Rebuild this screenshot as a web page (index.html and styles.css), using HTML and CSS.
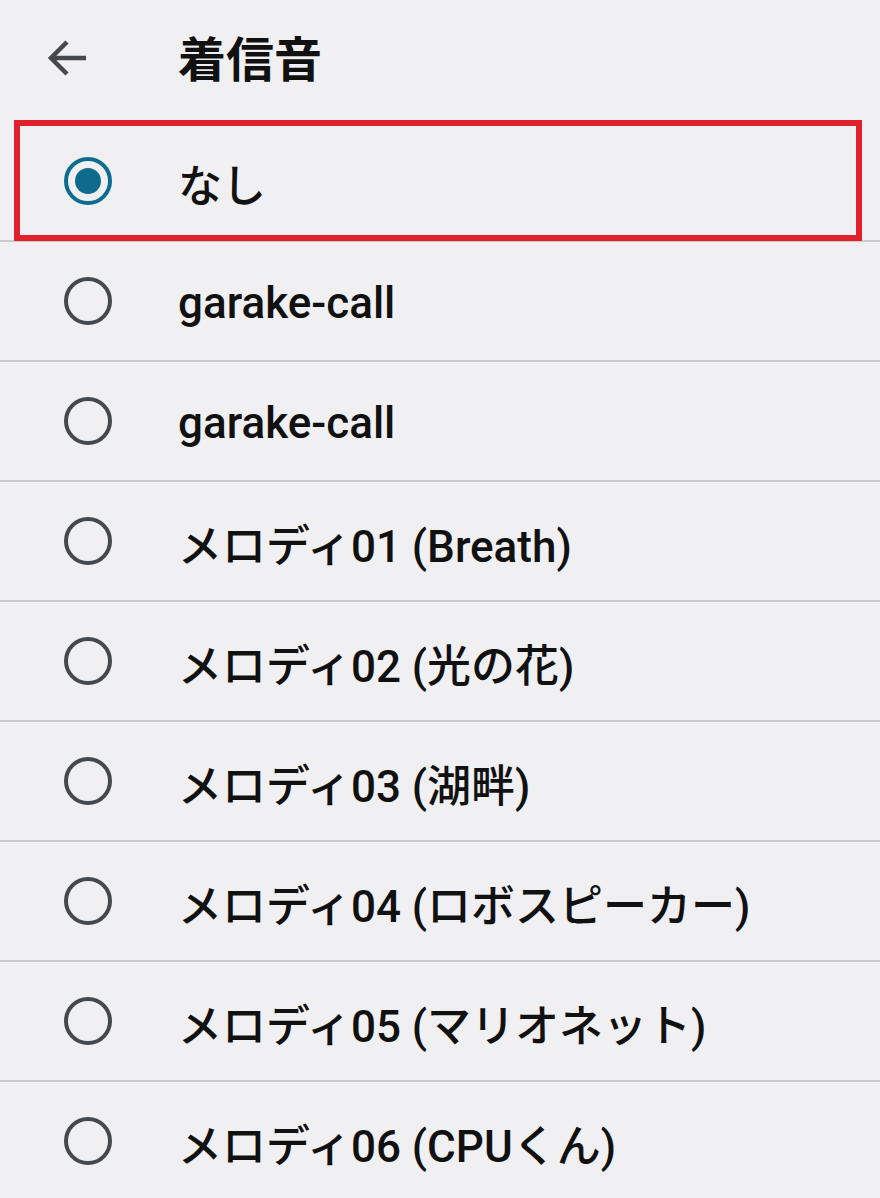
FILE: index.html
```html
<!DOCTYPE html>
<html lang="ja">
<head>
    <meta charset="UTF-8">
    <meta name="viewport" content="width=device-width, initial-scale=1.0">
    <title>着信音</title>
    <link rel="stylesheet" href="styles.css">
</head>
<body>

<div class="header">
    <svg class="back" width="44" height="40" viewBox="0 0 44 40">
        <path d="M40 20H6M21 4L5 20l16 16" fill="none" stroke="#45484c" stroke-width="4.5"/>
    </svg>
    <h1>着信音</h1>
</div>

<ul class="ringtones">
    <li class="row selected">
        <span class="radio on"></span>
        <span class="label">なし</span>
    </li>
    <li class="row"><span class="radio"></span><span class="label">garake-call</span></li>
    <li class="row"><span class="radio"></span><span class="label">garake-call</span></li>
    <li class="row"><span class="radio"></span><span class="label">メロディ01 (Breath)</span></li>
    <li class="row"><span class="radio"></span><span class="label">メロディ02 (光の花)</span></li>
    <li class="row"><span class="radio"></span><span class="label">メロディ03 (湖畔)</span></li>
    <li class="row"><span class="radio"></span><span class="label">メロディ04 (ロボスピーカー)</span></li>
    <li class="row"><span class="radio"></span><span class="label">メロディ05 (マリオネット)</span></li>
    <li class="row"><span class="radio"></span><span class="label">メロディ06 (CPUくん)</span></li>
</ul>

</body>
</html>
```

FILE: styles.css
```css
body, html {
    margin: 0;
    padding: 0;
    background-color: #f0f0f2;
    font-family: Roboto, "Noto Sans CJK JP", sans-serif;
    color: #111;
    overflow: hidden;
}
.header {
    display: flex;
    align-items: center;
    height: 122px;
}
.header .back {
    margin-left: 46px;
    margin-right: 88px;
    margin-top: -6px;
}
.header h1 {
    margin: 0;
    margin-top: -10px;
    font-size: 48px;
    font-weight: 700;
}
.ringtones {
    list-style: none;
    margin: 0;
    padding: 0;
}
.row {
    display: flex;
    align-items: center;
    height: 118px;
    border-bottom: 2px solid #cbcbcf;
    position: relative;
}
.row.selected::after {
    content: "";
    position: absolute;
    left: 14px;
    right: 18px;
    top: -2px;
    bottom: -1px;
    border: 6px solid #e0202b;
}
.radio {
    box-sizing: border-box;
    width: 48px;
    height: 48px;
    margin-left: 64px;
    margin-right: 66px;
    border: 4px solid #45484c;
    border-radius: 50%;
    display: flex;
    align-items: center;
    justify-content: center;
}
.radio.on {
    border-color: #0d6c8e;
}
.radio.on::before {
    content: "";
    width: 26px;
    height: 26px;
    border-radius: 50%;
    background-color: #0d6c8e;
}
.label {
    font-size: 44px;
    font-weight: 500;
    margin-top: 4px;
}
```
